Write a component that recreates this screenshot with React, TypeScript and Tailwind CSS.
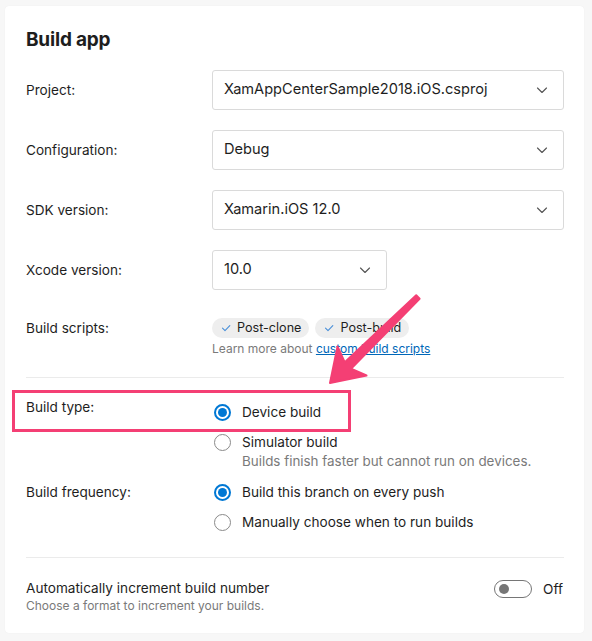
import React from "react";

const Chevron = () => (
  <svg width="14" height="14" viewBox="0 0 14 14" fill="none" className="shrink-0">
    <path d="M2.5 5 L7 9.5 L11.5 5" stroke="#555" strokeWidth="1.1" strokeLinecap="round" strokeLinejoin="round" />
  </svg>
);

const Select = ({ value, className = "" }: { value: string; className?: string }) => (
  <div className={`h-[40px] border border-[#dadada] rounded-[3px] bg-white flex items-center justify-between pl-[11px] pr-[14px] text-[14.6px] text-[#1e1e1e] ${className}`}>
    <span>{value}</span>
    <Chevron />
  </div>
);

const Radio = ({ checked }: { checked: boolean }) =>
  checked ? (
    <span className="w-[17px] h-[17px] rounded-full border-[2px] border-[#0078d4] flex items-center justify-center shrink-0">
      <span className="w-[9px] h-[9px] rounded-full bg-[#0078d4]" />
    </span>
  ) : (
    <span className="w-[17px] h-[17px] rounded-full border border-[#8a8a8a] shrink-0 bg-white" />
  );

const Check = () => (
  <svg width="10" height="10" viewBox="0 0 10 10" fill="none" className="shrink-0">
    <path d="M1.5 5.2 L4 7.6 L8.8 2.6" stroke="#4a90d9" strokeWidth="1.1" strokeLinecap="round" strokeLinejoin="round" />
  </svg>
);

const Chip = ({ label }: { label: string }) => (
  <span className="h-[20px] rounded-full bg-[#eeeeee] flex items-center gap-[6px] pl-[9px] pr-[8px] text-[12.6px] text-[#1e1e1e]">
    <Check />
    {label}
  </span>
);

export default function App() {
  return (
    <div className="min-h-[641px] w-[592px] bg-[#f7f7f7] pt-[6px] pl-[5px] relative" style={{ fontFamily: "Inter, 'Noto Sans', sans-serif" }}>
      <div className="w-[579px] bg-white rounded-[4px] shadow-[0_0_1px_rgba(0,0,0,0.08)] pt-[20px] pb-[19px] pl-[21px] pr-[20px] text-[#1e1e1e] relative">
        <h1 className="text-[19px] font-bold leading-[28px] tracking-[-0.2px]">Build app</h1>

        <div className="mt-[16px] flex flex-col gap-[20px]">
          <div className="grid grid-cols-[186px_1fr] items-center">
            <span className="text-[13.6px]">Project:</span>
            <Select value="XamAppCenterSample2018.iOS.csproj" />
          </div>
          <div className="grid grid-cols-[186px_1fr] items-center">
            <span className="text-[13.6px]">Configuration:</span>
            <Select value="Debug" />
          </div>
          <div className="grid grid-cols-[186px_1fr] items-center">
            <span className="text-[13.6px]">SDK version:</span>
            <Select value="Xamarin.iOS 12.0" />
          </div>
          <div className="grid grid-cols-[186px_1fr] items-center">
            <span className="text-[13.6px]">Xcode version:</span>
            <Select value="10.0" className="w-[175px]" />
          </div>
        </div>

        <div className="mt-[28px] grid grid-cols-[186px_1fr]">
          <span className="text-[13.6px] leading-[20px]">Build scripts:</span>
          <div>
            <div className="flex gap-[6px]">
              <Chip label="Post-clone" />
              <Chip label="Post-build" />
            </div>
            <div className="mt-[2px] text-[12px] leading-[18px] text-[#7a7a7a]">
              Learn more about <span className="text-[#0067b8] underline">custom build scripts</span>
            </div>
          </div>
        </div>

        <div className="mt-[19px] h-px bg-[#ebebeb]" />

        <div className="mt-[24px] grid grid-cols-[186px_1fr]">
          <span className="text-[13.6px] leading-[20px] -mt-[5px]">Build type:</span>
          <div className="flex flex-col">
            <div className="flex items-center gap-[11px] h-[20px] pl-[2px]">
              <Radio checked />
              <span className="text-[13.6px]">Device build</span>
            </div>
            <div className="mt-[10px] flex items-center gap-[11px] h-[20px] pl-[2px]">
              <Radio checked={false} />
              <span className="text-[13.6px]">Simulator build</span>
            </div>
            <div className="pl-[30px] text-[13.4px] leading-[18px] text-[#7a7a7a]">
              Builds finish faster but cannot run on devices.
            </div>
          </div>
        </div>

        <div className="mt-[12px] grid grid-cols-[186px_1fr]">
          <span className="text-[13.6px] leading-[20px]">Build frequency:</span>
          <div className="flex flex-col">
            <div className="flex items-center gap-[11px] h-[20px] pl-[2px]">
              <Radio checked />
              <span className="text-[13.6px]">Build this branch on every push</span>
            </div>
            <div className="mt-[10px] flex items-center gap-[11px] h-[20px] pl-[2px]">
              <Radio checked={false} />
              <span className="text-[13.6px]">Manually choose when to run builds</span>
            </div>
          </div>
        </div>

        <div className="mt-[25px] h-px bg-[#ebebeb]" />

        <div className="mt-[20px] flex justify-between">
          <div>
            <div className="text-[13.6px] leading-[20px]">Automatically increment build number</div>
            <div className="text-[12px] leading-[16px] text-[#7a7a7a]">Choose a format to increment your builds.</div>
          </div>
          <div className="flex items-start gap-[11px] pt-[2px] pr-[1px]">
            <span className="w-[38px] h-[18px] rounded-full border border-[#767676] flex items-center pl-[4px]">
              <span className="w-[10px] h-[10px] rounded-full bg-[#767676]" />
            </span>
            <span className="text-[13.6px] leading-[18px]">Off</span>
          </div>
        </div>
      </div>

      {/* annotation: highlight box */}
      <div className="absolute left-[12px] top-[390px] w-[339px] h-[42px] border-[3px] border-[#f43f74] pointer-events-none" />
      {/* annotation: arrow */}
      <svg className="absolute left-0 top-0 pointer-events-none" width="592" height="641" viewBox="0 0 592 641">
        <polygon
          points="330,383 337.5,346.5 344.8,362.3 416.2,295.2 419.6,298.8 351,368.7 366.5,375.5"
          fill="#f43f74"
          stroke="#f43f74"
          strokeWidth="2"
          strokeLinejoin="round"
        />
      </svg>
    </div>
  );
}
